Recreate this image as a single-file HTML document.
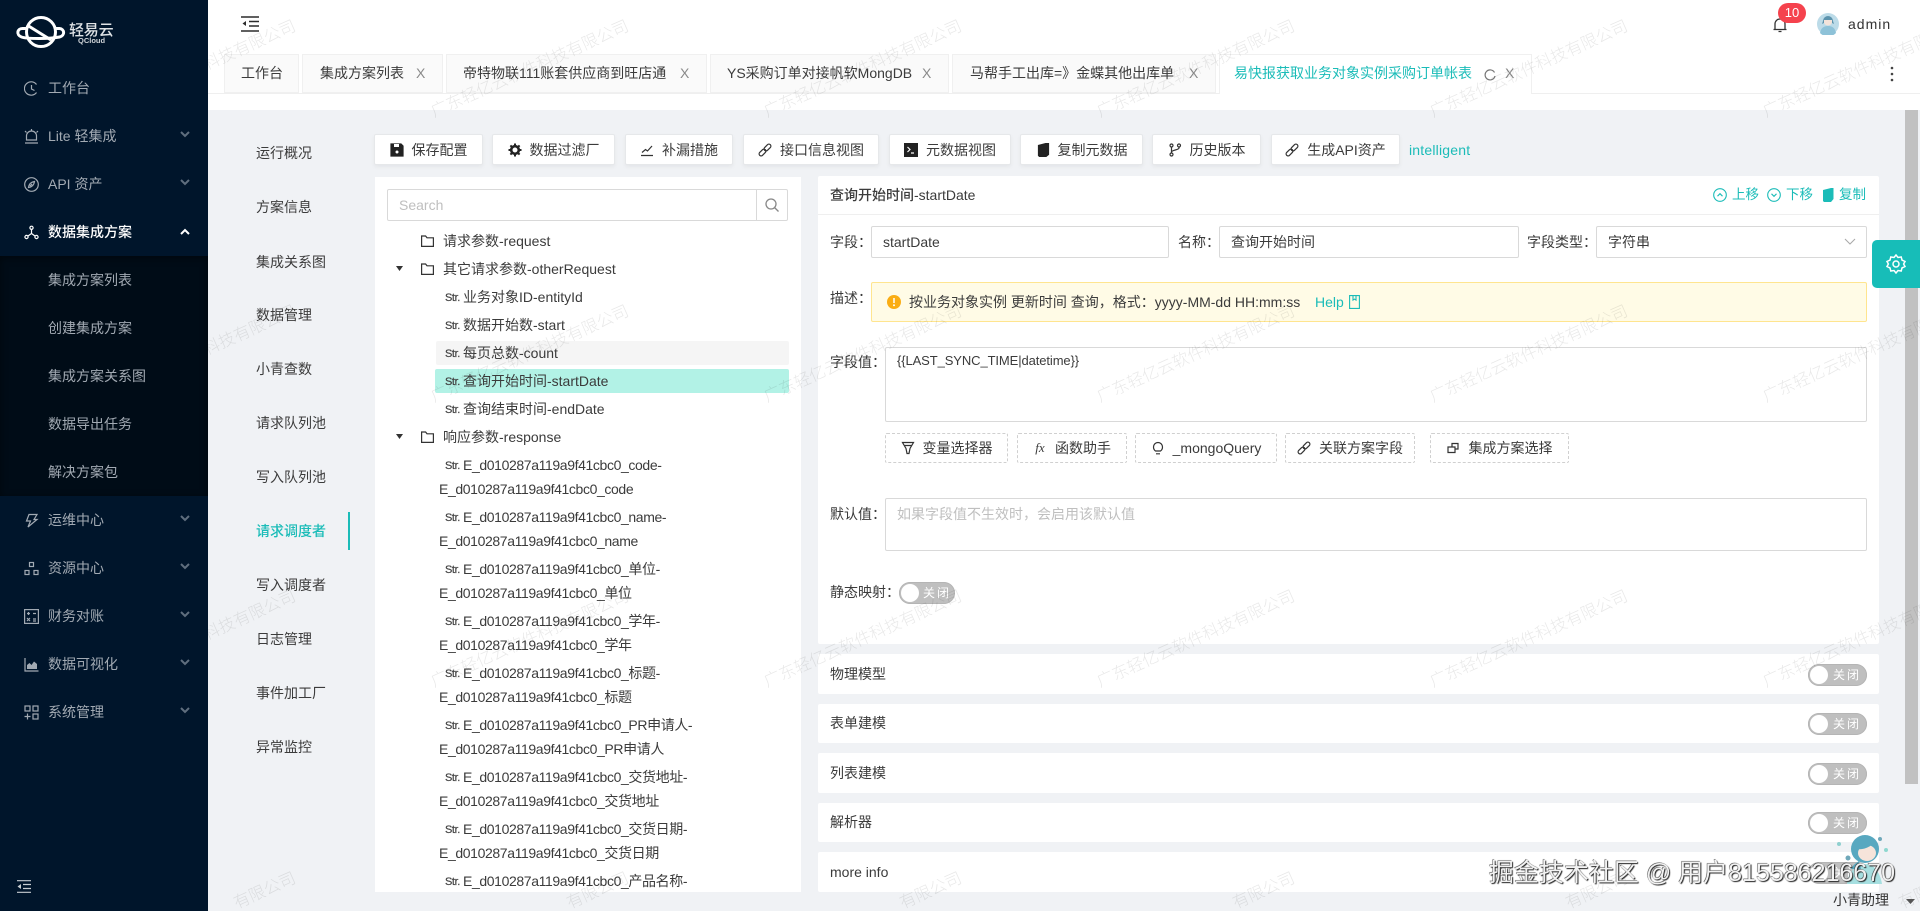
<!DOCTYPE html>
<html lang="zh-CN"><head><meta charset="utf-8"><title>轻易云</title>
<style>
*{box-sizing:border-box}
html,body{margin:0;padding:0;height:911px;overflow:hidden}
body{width:1920px;position:relative;background:#f0f2f5;font:14px/20px "Liberation Sans","Noto Sans CJK SC",sans-serif;color:#3b3b3b}
.a,.t,.b,.d,.tab,.sw,.f,.m,.c{position:absolute}
.t{white-space:nowrap;line-height:20px}
.e{letter-spacing:-.38px}
svg{display:block}
.side{left:0;top:0;width:208px;height:911px;background:#00152b;z-index:5}
.m{left:48px;white-space:nowrap;color:#a2aab3;line-height:20px}
.ic{position:absolute;left:24px;width:15px;height:15px;fill:none;stroke:#a2aab3;stroke-width:1.2}
.c{left:179px;width:12px;height:8px;fill:none;stroke:#5f6e7e;stroke-width:2}
.tab{top:54px;height:39px;background:#fafafa;border:1px solid #f0f0f0;line-height:37px;white-space:nowrap}
.tab i{position:absolute;top:0;font-style:normal;color:#8a8a8a;font-size:14px}
.b,.d{display:flex;align-items:center;justify-content:center;gap:8px;background:#fff;white-space:nowrap;color:#3b3b3b;border-radius:2px}
.b{top:134px;height:31px;border:1px solid #e6e8ea;box-shadow:0 2px 4px rgba(0,0,0,.05)}
.d{top:433px;height:30px;border:1px dashed #d0d0d0}
.b svg,.d svg{width:14px;height:14px;fill:none;stroke:#333;stroke-width:1.2;flex:none}
.f{background:#fff;border:1px solid #d9d9d9;border-radius:2px}
.sw{background:#bfbfbf;border-radius:11px;height:22px;color:#fff;font-size:12px;line-height:22px;letter-spacing:2px;box-shadow:inset 0 0 0 1px #b5b5b5}
.sw:before{content:"";position:absolute;left:2px;top:2px;width:18px;height:18px;border-radius:50%;background:#fff}
.sw span{position:absolute;left:24px;top:0}
.s{position:absolute;left:445px;font:11px/12px "Liberation Sans",sans-serif;letter-spacing:-.4px;color:#444;-webkit-text-stroke:.2px #444;margin-top:1px}
.p{position:absolute;left:818px;width:1061px;background:#fff;border-radius:2px}
.v{left:256px}
</style></head><body>

<!-- header -->
<div class="a" style="left:208px;top:0;width:1712px;height:110px;background:#fff"></div>
<svg class="a" style="left:241px;top:16px" width="18" height="16" fill="none" stroke="#2b2b2b" stroke-width="1.6"><path d="M0 1h18M8 5.500h10M8 10h10M0 15h18"/><path d="M5 5v5L1.500 7.500z" fill="#2b2b2b" stroke="none"/></svg>
<svg class="a" style="left:1772px;top:17px" width="16" height="16" fill="none" stroke="#333" stroke-width="1.300"><path d="M3 12.500V7a5 5 0 0 1 10 0v5.500M1.500 12.500h13M6.500 14.500h3"/></svg>
<div class="a" style="left:1778px;top:3px;width:28px;height:20px;border-radius:10px;background:#f5424d;color:#fff;font-size:13px;line-height:20px;text-align:center">10</div>
<svg class="a" style="left:1817px;top:13px" width="22" height="22"><circle cx="11" cy="11" r="11" fill="#bcdbe8"/><circle cx="11" cy="8" r="4.500" fill="#f3e3da"/><path d="M6 8a5 5 0 0 1 10 0l1 3-2-1V7H7v3l-2 1z" fill="#5c93ad"/><path d="M3 20c1-6 5-7 8-7s7 1 8 7a11 11 0 0 1-16 0z" fill="#8ec2d8"/></svg>
<div class="t" style="left:1848px;top:14px;letter-spacing:1px;font-size:14px;color:#333">admin</div>

<!-- tabs -->
<div class="a" style="left:208px;top:93px;width:1712px;height:1px;background:#efefef"></div>
<div class="tab" style="left:224px;width:75px;padding-left:16px">工作台</div>
<div class="tab" style="left:302px;width:141px;padding-left:17px">集成方案列表<i style="left:113px">X</i></div>
<div class="tab" style="left:446px;width:261px;padding-left:16px">帝特物联111账套供应商到旺店通<i style="left:233px">X</i></div>
<div class="tab" style="left:710px;width:239px;padding-left:16px">YS采购订单对接帆软MongDB<i style="left:211px">X</i></div>
<div class="tab" style="left:952px;width:264px;padding-left:17px">马帮手工出库=》金蝶其他出库单<i style="left:236px">X</i></div>
<div class="tab" style="left:1219px;width:313px;height:40px;padding-left:14px;background:#fff;border-bottom:0;color:#1bbcb8">易快报获取业务对象实例采购订单帐表<i style="left:285px">X</i></div>
<svg class="a" style="left:1484px;top:69px" width="12" height="12" fill="none" stroke="#777" stroke-width="1.200"><path d="M10.500 3.500A5 5 0 1 0 11 7"/></svg>
<svg class="a" style="left:1890px;top:66px" width="4" height="16" fill="#444"><circle cx="2" cy="2" r="1.300"/><circle cx="2" cy="8" r="1.300"/><circle cx="2" cy="14" r="1.300"/></svg>

<!-- vertical tabs -->
<div class="t v" style="top:143px">运行概况</div>
<div class="t v" style="top:197px">方案信息</div>
<div class="t v" style="top:252px">集成关系图</div>
<div class="t v" style="top:305px">数据管理</div>
<div class="t v" style="top:359px">小青查数</div>
<div class="t v" style="top:413px">请求队列池</div>
<div class="t v" style="top:467px">写入队列池</div>
<div class="t v" style="top:521px;color:#1bbcb8;font-weight:500">请求调度者</div>
<div class="t v" style="top:575px">写入调度者</div>
<div class="t v" style="top:629px">日志管理</div>
<div class="t v" style="top:683px">事件加工厂</div>
<div class="t v" style="top:737px">异常监控</div>
<div class="a" style="left:348px;top:512px;width:2px;height:38px;background:#1bbcb8"></div>

<!-- toolbar -->
<div class="b" style="left:374px;width:109px"><svg viewBox="0 0 14 14"><path d="M1 1h10l2 2v10H1z" fill="#222" stroke="#222"/><circle cx="7" cy="9" r="1.500" fill="#fff" stroke="none"/><path d="M4 1h5v3H4z" fill="#fff" stroke="none"/></svg>保存配置</div>
<div class="b" style="left:492px;width:123px"><svg viewBox="0 0 14 14"><circle cx="7" cy="7" r="3.800" stroke="#222" stroke-width="2.600"/><path d="M7 .5v2M7 11.500v2M.5 7h2M11.500 7h2M2.400 2.400l1.400 1.400M10.200 10.200l1.400 1.400M2.400 11.600l1.400-1.400M10.200 3.800l1.400-1.400" stroke="#222" stroke-width="2"/></svg>数据过滤厂</div>
<div class="b" style="left:625px;width:108px"><svg viewBox="0 0 14 14"><path d="M1 12.500h12M2 9.500l3.500-3 2 1.500L12 3"/></svg>补漏措施</div>
<div class="b" style="left:743px;width:136px"><svg viewBox="0 0 14 14"><g transform="rotate(-45 7 7)"><rect x="-.5" y="5" width="8" height="4" rx="2"/><rect x="6.500" y="5" width="8" height="4" rx="2"/></g></svg>接口信息视图</div>
<div class="b" style="left:889px;width:122px"><svg viewBox="0 0 14 14"><rect x=".5" y=".5" width="13" height="13" fill="#222" stroke="#222"/><path d="M3.500 4l2.500 2.500L3.500 9M7 10h3" stroke="#fff"/></svg>元数据视图</div>
<div class="b" style="left:1020px;width:123px"><svg viewBox="0 0 14 14"><path d="M2.500 2.500L10 .5h2.500v11L10 13.500H3.500l-1-1z" fill="#222" stroke="#222"/></svg>复制元数据</div>
<div class="b" style="left:1152px;width:109px"><svg viewBox="0 0 14 14"><circle cx="3.500" cy="2.500" r="1.500"/><circle cx="3.500" cy="11.500" r="1.500"/><circle cx="11" cy="2.500" r="1.500"/><path d="M3.500 4v6M11 4v1c0 2-7.500 2-7.500 4"/></svg>历史版本</div>
<div class="b" style="left:1271px;width:129px"><svg viewBox="0 0 14 14"><g transform="rotate(-45 7 7)"><rect x="-.5" y="5" width="8" height="4" rx="2"/><rect x="6.500" y="5" width="8" height="4" rx="2"/></g></svg>生成API资产</div>
<div class="t" style="left:1409px;top:140px;color:#1bbcb8;letter-spacing:.2px">intelligent</div>

<!-- tree panel -->
<div class="a" style="left:375px;top:177px;width:426px;height:715px;background:#fff"></div>
<div class="f" style="left:387px;top:189px;width:401px;height:32px"></div>
<div class="a" style="left:756px;top:190px;width:1px;height:30px;background:#d9d9d9"></div>
<div class="t" style="left:399px;top:195px;color:#bfbfbf">Search</div>
<svg class="a" style="left:764px;top:197px" width="16" height="16" fill="none" stroke="#888" stroke-width="1.300"><circle cx="7" cy="7" r="5"/><path d="M10.500 10.500l4 4"/></svg>

<div class="a" style="left:436px;top:341px;width:353px;height:24px;background:#f5f5f5;border-radius:2px"></div>
<div class="a" style="left:435px;top:369px;width:354px;height:24px;background:#b2f2e6;border-radius:2px"></div>

<svg class="a" style="left:421px;top:235px" width="13" height="12" fill="none" stroke="#333" stroke-width="1.200"><path d="M.6 1h4l1.400 1.800h6.400v8.600H.6z"/></svg>
<div class="t" style="left:443px;top:231px">请求参数-request</div>
<svg class="a" style="left:396px;top:266px" width="7" height="5"><path d="M0 0h7L3.500 5z" fill="#333"/></svg>
<svg class="a" style="left:421px;top:263px" width="13" height="12" fill="none" stroke="#333" stroke-width="1.200"><path d="M.6 1h4l1.400 1.800h6.400v8.600H.6z"/></svg>
<div class="t" style="left:443px;top:259px">其它请求参数-otherRequest</div>
<div class="s" style="top:291px">Str.</div><div class="t" style="left:463px;top:287px">业务对象ID-entityId</div>
<div class="s" style="top:319px">Str.</div><div class="t" style="left:463px;top:315px">数据开始数-start</div>
<div class="s" style="top:347px">Str.</div><div class="t" style="left:463px;top:343px">每页总数-count</div>
<div class="s" style="top:375px">Str.</div><div class="t" style="left:463px;top:371px">查询开始时间-startDate</div>
<div class="s" style="top:403px">Str.</div><div class="t" style="left:463px;top:399px">查询结束时间-endDate</div>
<svg class="a" style="left:396px;top:434px" width="7" height="5"><path d="M0 0h7L3.500 5z" fill="#333"/></svg>
<svg class="a" style="left:421px;top:431px" width="13" height="12" fill="none" stroke="#333" stroke-width="1.200"><path d="M.6 1h4l1.400 1.800h6.400v8.600H.6z"/></svg>
<div class="t" style="left:443px;top:427px">响应参数-response</div>

<div class="s" style="top:459px">Str.</div><div class="t e" style="left:463px;top:455px">E_d010287a119a9f41cbc0_code-</div><div class="t e" style="left:439px;top:479px">E_d010287a119a9f41cbc0_code</div>
<div class="s" style="top:511px">Str.</div><div class="t e" style="left:463px;top:507px">E_d010287a119a9f41cbc0_name-</div><div class="t e" style="left:439px;top:531px">E_d010287a119a9f41cbc0_name</div>
<div class="s" style="top:563px">Str.</div><div class="t e" style="left:463px;top:559px">E_d010287a119a9f41cbc0_单位-</div><div class="t e" style="left:439px;top:583px">E_d010287a119a9f41cbc0_单位</div>
<div class="s" style="top:615px">Str.</div><div class="t e" style="left:463px;top:611px">E_d010287a119a9f41cbc0_学年-</div><div class="t e" style="left:439px;top:635px">E_d010287a119a9f41cbc0_学年</div>
<div class="s" style="top:667px">Str.</div><div class="t e" style="left:463px;top:663px">E_d010287a119a9f41cbc0_标题-</div><div class="t e" style="left:439px;top:687px">E_d010287a119a9f41cbc0_标题</div>
<div class="s" style="top:719px">Str.</div><div class="t e" style="left:463px;top:715px">E_d010287a119a9f41cbc0_PR申请人-</div><div class="t e" style="left:439px;top:739px">E_d010287a119a9f41cbc0_PR申请人</div>
<div class="s" style="top:771px">Str.</div><div class="t e" style="left:463px;top:767px">E_d010287a119a9f41cbc0_交货地址-</div><div class="t e" style="left:439px;top:791px">E_d010287a119a9f41cbc0_交货地址</div>
<div class="s" style="top:823px">Str.</div><div class="t e" style="left:463px;top:819px">E_d010287a119a9f41cbc0_交货日期-</div><div class="t e" style="left:439px;top:843px">E_d010287a119a9f41cbc0_交货日期</div>
<div class="s" style="top:875px">Str.</div><div class="t e" style="left:463px;top:871px">E_d010287a119a9f41cbc0_产品名称-</div>

<!-- right panel -->
<div class="p" style="top:176px;height:468px"></div>
<div class="a" style="left:818px;top:214px;width:1061px;height:1px;background:#efefef"></div>
<div class="t" style="left:830px;top:185px;font-size:14px;font-weight:500">查询开始时间-startDate</div>

<svg class="a" style="left:1713px;top:188px" width="14" height="14" fill="none" stroke="#1bbcb8" stroke-width="1.100"><circle cx="7" cy="7" r="6.300"/><path d="M4.500 8.200L7 5.700l2.500 2.500"/></svg>
<div class="t" style="left:1732px;top:185px;color:#1bbcb8;font-size:13.500px">上移</div>
<svg class="a" style="left:1767px;top:188px" width="14" height="14" fill="none" stroke="#1bbcb8" stroke-width="1.100"><circle cx="7" cy="7" r="6.300"/><path d="M4.500 5.800L7 8.300l2.500-2.500"/></svg>
<div class="t" style="left:1786px;top:185px;color:#1bbcb8;font-size:13.500px">下移</div>
<svg class="a" style="left:1822px;top:188px" width="12" height="14"><path d="M1 2L9 0h2.500v11L9 14H2l-1-1z" fill="#1bbcb8"/></svg>
<div class="t" style="left:1839px;top:185px;color:#1bbcb8;font-size:13.500px">复制</div>

<div class="t" style="left:830px;top:232px">字段：</div>
<div class="f" style="left:871px;top:226px;width:298px;height:32px"></div>
<div class="t" style="left:883px;top:232px">startDate</div>
<div class="t" style="left:1178px;top:232px">名称：</div>
<div class="f" style="left:1219px;top:226px;width:300px;height:32px"></div>
<div class="t" style="left:1231px;top:232px">查询开始时间</div>
<div class="t" style="left:1527px;top:232px">字段类型：</div>
<div class="f" style="left:1596px;top:226px;width:271px;height:32px"></div>
<div class="t" style="left:1608px;top:232px">字符串</div>
<svg class="a" style="left:1844px;top:238px" width="12" height="8" fill="none" stroke="#aaa" stroke-width="1.100"><path d="M1 1l5 5 5-5"/></svg>

<div class="t" style="left:830px;top:288px">描述：</div>
<div class="a" style="left:871px;top:282px;width:996px;height:40px;background:#fffbe6;border:1px solid #ffe58f;border-radius:2px"></div>
<svg class="a" style="left:887px;top:295px" width="14" height="14"><circle cx="7" cy="7" r="7" fill="#faad14"/><path d="M7 3v5" stroke="#fff" stroke-width="1.500"/><circle cx="7" cy="10.300" r="1" fill="#fff"/></svg>
<div class="t" style="left:909px;top:292px">按业务对象实例 更新时间 查询，格式：yyyy-MM-dd HH:mm:ss</div>
<div class="t" style="left:1315px;top:292px;color:#1bbcb8">Help</div>
<svg class="a" style="left:1349px;top:295px" width="11" height="14" fill="none" stroke="#1bbcb8" stroke-width="1.100"><path d="M.6.6h9.800v12.800H.6zM4 .6v4.500l1.500-1 1.500 1V.6"/></svg>

<div class="t" style="left:830px;top:352px">字段值：</div>
<div class="f" style="left:885px;top:347px;width:982px;height:75px"></div>
<div class="t" style="left:897px;top:351px;font-size:13px;letter-spacing:-.1px">{{LAST_SYNC_TIME|datetime}}</div>

<div class="d" style="left:885px;width:123px"><svg viewBox="0 0 14 14"><path d="M1.500 1.500h11L9 7.500l-1 5H6l-1-5zM3.500 4.500h7"/></svg>变量选择器</div>
<div class="d" style="left:1017px;width:110px"><span style="font:italic 13px 'Liberation Serif',serif;width:14px;text-align:center">fx</span>函数助手</div>
<div class="d" style="left:1135px;width:142px"><svg viewBox="0 0 14 14"><path d="M4.500 10C3 9 2.500 7.500 2.500 6a4.500 4.500 0 0 1 9 0c0 1.500-.5 3-2 4zM5 12.800h4"/></svg>_mongoQuery</div>
<div class="d" style="left:1285px;width:130px"><svg viewBox="0 0 14 14"><g transform="rotate(-45 7 7)"><rect x="-.5" y="5" width="8" height="4" rx="2"/><rect x="6.500" y="5" width="8" height="4" rx="2"/></g></svg>关联方案字段</div>
<div class="d" style="left:1430px;width:139px"><svg viewBox="0 0 14 14"><path d="M5 6V2.500h6V8H8M1 6h7v5.500H1z"/></svg>集成方案选择</div>

<div class="t" style="left:830px;top:504px">默认值：</div>
<div class="f" style="left:885px;top:498px;width:982px;height:53px"></div>
<div class="t" style="left:897px;top:504px;color:#bfbfbf">如果字段值不生效时，会启用该默认值</div>

<div class="t" style="left:830px;top:582px">静态映射：</div>
<div class="sw" style="left:899px;top:582px;width:56px"><span>关闭</span></div>

<div class="p" style="top:654px;height:40px"></div>
<div class="p" style="top:704px;height:39px"></div>
<div class="p" style="top:753px;height:40px"></div>
<div class="p" style="top:803px;height:39px"></div>
<div class="p" style="top:852px;height:40px"></div>
<div class="t" style="left:830px;top:664px">物理模型</div>
<div class="t" style="left:830px;top:713px">表单建模</div>
<div class="t" style="left:830px;top:763px">列表建模</div>
<div class="t" style="left:830px;top:812px">解析器</div>
<div class="t" style="left:830px;top:862px;font-weight:500">more info</div>
<div class="sw" style="left:1808px;top:664px;width:59px"><span style="left:25px">关闭</span></div>
<div class="sw" style="left:1808px;top:713px;width:59px"><span style="left:25px">关闭</span></div>
<div class="sw" style="left:1808px;top:763px;width:59px"><span style="left:25px">关闭</span></div>
<div class="sw" style="left:1808px;top:812px;width:59px"><span style="left:25px">关闭</span></div>
<div class="sw" style="left:1808px;top:862px;width:59px"><span style="left:25px">关闭</span></div>

<!-- scrollbar + settings -->
<div class="a" style="left:1905px;top:110px;width:13px;height:674px;background:#c1c1c1"></div>

<!-- watermark -->
<div class="a" style="left:0;top:0;width:1920px;height:911px;overflow:hidden;z-index:3;pointer-events:none">
<svg width="1920" height="911" font-family="'Liberation Sans','Noto Sans CJK SC',sans-serif" font-size="16.500" fill="#000" fill-opacity=".09" text-anchor="end" font-weight="300">
<text transform="translate(297,30) rotate(-24)">广东轻亿云软件科技有限公司</text><text transform="translate(630,30) rotate(-24)">广东轻亿云软件科技有限公司</text><text transform="translate(963,30) rotate(-24)">广东轻亿云软件科技有限公司</text><text transform="translate(1296,30) rotate(-24)">广东轻亿云软件科技有限公司</text><text transform="translate(1629,30) rotate(-24)">广东轻亿云软件科技有限公司</text><text transform="translate(1962,30) rotate(-24)">广东轻亿云软件科技有限公司</text>
<text transform="translate(297,315) rotate(-24)">广东轻亿云软件科技有限公司</text><text transform="translate(630,315) rotate(-24)">广东轻亿云软件科技有限公司</text><text transform="translate(963,315) rotate(-24)">广东轻亿云软件科技有限公司</text><text transform="translate(1296,315) rotate(-24)">广东轻亿云软件科技有限公司</text><text transform="translate(1629,315) rotate(-24)">广东轻亿云软件科技有限公司</text><text transform="translate(1962,315) rotate(-24)">广东轻亿云软件科技有限公司</text>
<text transform="translate(297,600) rotate(-24)">广东轻亿云软件科技有限公司</text><text transform="translate(630,600) rotate(-24)">广东轻亿云软件科技有限公司</text><text transform="translate(963,600) rotate(-24)">广东轻亿云软件科技有限公司</text><text transform="translate(1296,600) rotate(-24)">广东轻亿云软件科技有限公司</text><text transform="translate(1629,600) rotate(-24)">广东轻亿云软件科技有限公司</text><text transform="translate(1962,600) rotate(-24)">广东轻亿云软件科技有限公司</text>
<text transform="translate(297,882) rotate(-24)">有限公司</text><text transform="translate(630,882) rotate(-24)">有限公司</text><text transform="translate(963,882) rotate(-24)">有限公司</text><text transform="translate(1296,882) rotate(-24)">有限公司</text><text transform="translate(1629,882) rotate(-24)">有限公司</text><text transform="translate(1962,882) rotate(-24)">有限公司</text>
</svg>
</div>

<div class="a" style="left:1872px;top:240px;width:48px;height:48px;background:#17bdb8;border-radius:5px 0 0 5px;z-index:4"></div>
<svg class="a" style="left:1886px;top:254px;z-index:4" width="20" height="20" viewBox="0 0 20 20" fill="none" stroke="#fff" stroke-width="1.500"><path d="M10 1l2 2.500 3.200-.5.800 3.100 3 1.400-1.400 2.500 1.400 2.500-3 1.400-.8 3.100-3.200-.5L10 19l-2-2.500-3.200.5-.8-3.100-3-1.400L2.400 10 1 7.500l3-1.400.8-3.100 3.200.5z"/><circle cx="10" cy="10" r="3"/></svg>

<!-- assistant -->
<svg class="a" style="left:1835px;top:832px;z-index:4" width="56" height="54" viewBox="0 0 56 54"><circle cx="4" cy="12" r="2" fill="#8fd0cf"/><circle cx="45" cy="7" r="2" fill="#6fa8ba"/><circle cx="51" cy="18" r="2" fill="#8fd8d0"/><circle cx="13" cy="26" r="2.500" fill="#6fa8ba"/><path d="M12 52c1-12 9-20 18-20s15 8 17 20z" fill="#a6dfe0"/><circle cx="30" cy="17" r="14" fill="#58a8c0"/><path d="M24 29c-3 2-6 4-8 8h10z" fill="#58a8c0"/><ellipse cx="32" cy="21" rx="9" ry="8" fill="#f6e4da"/><path d="M22 17c5 1 11-1 16-5l-2-4H25z" fill="#58a8c0"/></svg>
<div class="t" style="left:1833px;top:890px;z-index:4;font-size:14px;color:#333">小青助理</div>
<svg class="a" style="left:1906px;top:899px;z-index:4" width="9" height="5"><path d="M0 0h9L4.500 5z" fill="#555"/></svg>

<div class="t" style="right:25px;top:859px;z-index:6;font-size:25px;line-height:28px;color:#f2f2f2;text-shadow:1px 1px 1px #222,-.5px -.5px .5px #444">掘金技术社区 @ 用户815586216670</div>

<!-- sidebar -->
<div class="a side">
<svg class="a" style="left:15px;top:15px" width="52" height="35" viewBox="0 0 52 35" fill="none" stroke="#fff" stroke-width="3"><circle cx="26" cy="17" r="14.500"/><path d="M12 13.500H7.500C2 13.500 1 20 6.500 22c6 2 28 2 38 0 6-1.500 5-8 0-8.500H40"/><path d="M12 10l24 15"/></svg>
<div class="t" style="left:69px;top:21px;width:46px;font-size:15px;color:#dfe3e6;letter-spacing:-.2px;font-weight:500">轻易云</div>
<div class="t" style="left:78px;top:36px;font-size:7.500px;line-height:10px;font-weight:700;color:#cfd4d8">QCloud</div>

<svg class="ic" style="top:81px" viewBox="0 0 15 15"><path d="M12.500 3.500a6.700 6.700 0 1 0 0 8M7.500 4v4l3 1.500"/></svg>
<div class="m" style="top:78px">工作台</div>
<svg class="ic" style="top:129px" viewBox="0 0 15 15"><path d="M2.500 11V7a5 5 0 0 1 10 0v4zM1 14h13M7.500 0v1.500M1 2l1.500 1.500M14 2l-1.500 1.500"/></svg>
<div class="m" style="top:126px">Lite 轻集成</div>
<svg class="c" style="top:131px"><path d="M2 1l4 4 4-4"/></svg>
<svg class="ic" style="top:177px" viewBox="0 0 15 15"><circle cx="7.500" cy="7.500" r="6.800"/><path d="M10.500 4.500C7 5 5 7 4.500 10.500 8 10 10 8 10.500 4.500zM6 9l2-2"/></svg>
<div class="m" style="top:174px">API 资产</div>
<svg class="c" style="top:179px"><path d="M2 1l4 4 4-4"/></svg>
<svg class="ic" style="top:225px;stroke:#fff" viewBox="0 0 15 15"><circle cx="7.500" cy="2.800" r="1.600"/><circle cx="2.500" cy="12" r="1.600"/><circle cx="12.500" cy="12" r="1.600"/><path d="M7.500 4.500v4L4 11M7.500 8.500L11 11"/></svg>
<div class="m" style="top:222px;color:#fff;font-weight:500">数据集成方案</div>
<svg class="c" style="top:228px;stroke:#fff"><path d="M2 6l4-4 4 4"/></svg>

<div class="a" style="left:0;top:256px;width:208px;height:240px;background:#000c17;box-shadow:inset 0 2px 8px rgba(0,0,0,.45)"></div>
<div class="m" style="top:270px">集成方案列表</div>
<div class="m" style="top:318px">创建集成方案</div>
<div class="m" style="top:366px">集成方案关系图</div>
<div class="m" style="top:414px">数据导出任务</div>
<div class="m" style="top:462px">解决方案包</div>

<svg class="ic" style="top:513px" viewBox="0 0 15 15"><path d="M5 1.500h8L10 6.500h3L4 14l2.500-6H2.500z"/></svg>
<div class="m" style="top:510px">运维中心</div>
<svg class="c" style="top:515px"><path d="M2 1l4 4 4-4"/></svg>
<svg class="ic" style="top:561px" viewBox="0 0 15 15"><rect x="5.500" y="1.500" width="4" height="4"/><rect x="1" y="9.500" width="4" height="4"/><rect x="10" y="9.500" width="4" height="4"/></svg>
<div class="m" style="top:558px">资源中心</div>
<svg class="c" style="top:563px"><path d="M2 1l4 4 4-4"/></svg>
<svg class="ic" style="top:609px" viewBox="0 0 15 15"><rect x=".6" y=".6" width="13.800" height="13.800"/><path d="M3 4.500h3M4.500 3v3M9 4.500h3M3 9l3 3M6 9l-3 3M9 10h3M9 12h3"/></svg>
<div class="m" style="top:606px">财务对账</div>
<svg class="c" style="top:611px"><path d="M2 1l4 4 4-4"/></svg>
<svg class="ic" style="top:657px" viewBox="0 0 15 15"><path d="M1 1v13h13.500"/><path d="M3 12V8l2.500-2 2 2L10 4.500 13 7v5z" fill="#a2aab3" stroke="none"/></svg>
<div class="m" style="top:654px">数据可视化</div>
<svg class="c" style="top:659px"><path d="M2 1l4 4 4-4"/></svg>
<svg class="ic" style="top:705px" viewBox="0 0 15 15"><rect x="1" y="1" width="5" height="5"/><rect x="9" y="1" width="5" height="5"/><rect x="9" y="9" width="5" height="5"/><path d="M3.500 8.500v6M.5 11.500h6"/></svg>
<div class="m" style="top:702px">系统管理</div>
<svg class="c" style="top:707px"><path d="M2 1l4 4 4-4"/></svg>

<svg class="a" style="left:17px;top:880px" width="14" height="13" fill="none" stroke="#c7ccd1" stroke-width="1.200"><path d="M0 .7h14M6 4.500h8M6 8.500h8M0 12.300h14"/><path d="M4 4v5L.5 6.500z" fill="#c7ccd1" stroke="none"/></svg>
</div>
</body></html>
